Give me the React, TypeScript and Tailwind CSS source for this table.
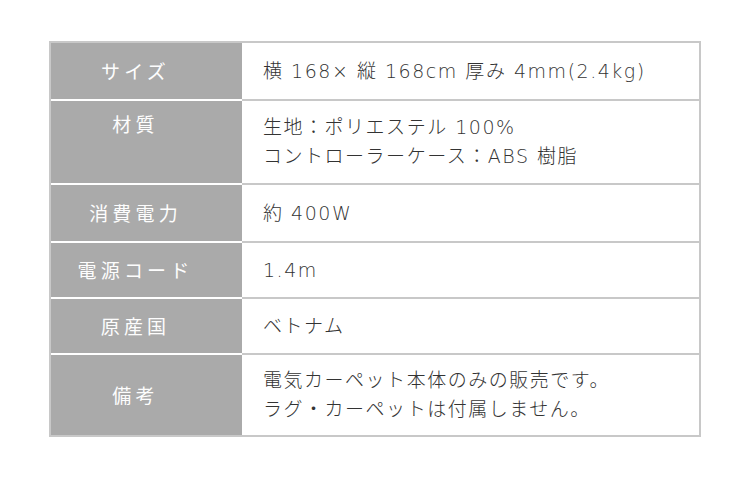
const rows: { label: string; lines: string[]; h: string; top?: boolean }[] = [
  { label: "サイズ", lines: ["横 168× 縦 168cm 厚み 4mm(2.4kg)"], h: "h-[56px]" },
  { label: "材質", lines: ["生地：ポリエステル 100%", "コントローラーケース：ABS 樹脂"], h: "h-[84px]", top: true },
  { label: "消費電力", lines: ["約 400W"], h: "h-[58px]" },
  { label: "電源コード", lines: ["1.4m"], h: "h-[56px]" },
  { label: "原産国", lines: ["ベトナム"], h: "h-[56px]" },
  { label: "備考", lines: ["電気カーペット本体のみの販売です。", "ラグ・カーペットは付属しません。"], h: "h-[82px]" },
];

export default function App() {
  return (
    <div
      className="w-[750px] h-[494px] bg-white pt-[41px] pl-[49px]"
      style={{ fontFamily: '"Noto Sans CJK JP", sans-serif' }}
    >
      <div className="w-[652px] border-2 border-[#c8c8c8]">
        {rows.map((row, i) => (
          <div key={row.label} className={`flex ${row.h} ${i > 0 ? "border-t-2 border-[#c8c8c8]" : ""}`}>
            <div
              className={`w-[191px] shrink-0 bg-[#aaaaaa] text-[#fdfdfd] text-[19px] tracking-[0.22em] pr-[22px] flex justify-center ${
                row.top ? "items-start pt-[9px]" : "items-center"
              } ${i > 0 ? "border-t-2 border-white -mt-[2px]" : ""}`}
            >
              {row.label}
            </div>
            <div
              className="flex-1 flex flex-col justify-center pl-[21px] text-[#333333] text-[19px] leading-[29px] tracking-[0.08em] font-light whitespace-pre"
              style={{ fontFamily: '"DejaVu Sans", "Noto Sans CJK JP", sans-serif' }}
            >
              {row.lines.map((l) => (
                <div key={l}>{l}</div>
              ))}
            </div>
          </div>
        ))}
      </div>
    </div>
  );
}
